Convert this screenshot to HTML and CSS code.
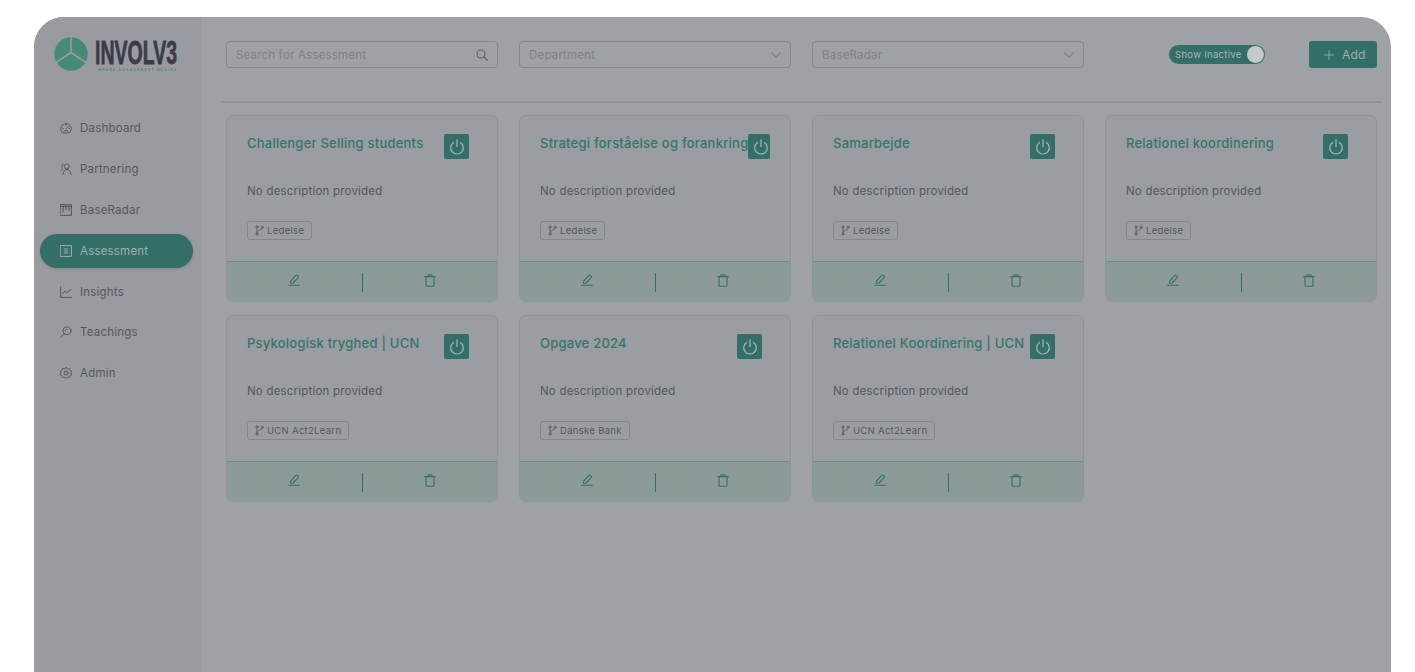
FILE: index.html
```html
<!DOCTYPE html>
<html lang="en">
<head>
<meta charset="utf-8">
<title>Involv3 - Assessment</title>
<link rel="stylesheet" href="styles.css">
</head>
<body>
<svg class="defs" width="0" height="0" aria-hidden="true">
  <symbol id="i-power" viewBox="0 0 16 16"><path d="M4.600 3.400a6.300 6.300 0 1 0 6.800 0M8 .8v6.600"/></symbol>
  <symbol id="i-branch" viewBox="0 0 10 12"><circle cx="2.200" cy="2" r="1.200"/><circle cx="2.200" cy="10" r="1.200"/><circle cx="8" cy="2.400" r="1.200"/><path d="M2.200 3.200v5.600M8 3.600c0 2.400-5.800 1.600-5.800 4.400"/></symbol>
  <symbol id="i-edit" viewBox="0 0 12 12"><path d="M.6 11.300h10.800M2.400 9.200l.4-2.400L7.900 1.300a.9.9 0 0 1 1.300 0l1 1a.9.9 0 0 1 0 1.300L5 9l-2.600.2z"/></symbol>
  <symbol id="i-trash" viewBox="0 0 12 13"><path d="M.6 2.600h10.800M2 2.600v8.600a1 1 0 0 0 1 1h6a1 1 0 0 0 1-1V2.600M4 2.600V1.400a.7.7 0 0 1 .7-.7h2.600a.7.7 0 0 1 .7.7v1.200"/></symbol>
  <symbol id="i-chevron" viewBox="0 0 10 6"><path d="M.7.8 5 5.200 9.300.8"/></symbol>
</svg>
<div class="app">
  <aside class="sidebar">
    <div class="logo">
      <svg class="logo-mark" viewBox="0 0 34 34" width="34" height="34"><circle cx="17" cy="17" r="16.700" class="logo-disc"/><path d="M17 0v15.500M17 15.500 2 25.500M17 15.500l15 10" class="logo-cut"/></svg>
      <svg class="logo-word" viewBox="0 0 86 36" width="86" height="36"><text x="1" y="24" textLength="82" lengthAdjust="spacingAndGlyphs" class="logo-name">INVOLV3</text><text x="4" y="31" textLength="78" class="logo-tag">WHERE ENGAGEMENT BEGINS</text></svg>
    </div>
    <nav class="nav">
      <a class="nav-item"><svg class="nav-icon" viewBox="0 0 12 12"><path d="M2.200 10.600a5.300 5.300 0 1 1 7.600 0zM6 6.800l2.300-2.300M2.500 6.400h.8M8.800 6.400h.8M6 2.600v.8M4.200 8.800h3.600"/></svg><span>Dashboard</span></a>
      <a class="nav-item"><svg class="nav-icon" viewBox="0 0 12 12"><circle cx="6.800" cy="3.400" r="2.500"/><path d="M3 11.400c.4-3 1.800-5 3.800-5s3.800 2 4.400 5M3.400 1C2 1.600 1.500 3 2.200 4.400M.6 7.800l2-2"/></svg><span>Partnering</span></a>
      <a class="nav-item"><svg class="nav-icon" viewBox="0 0 12 12"><rect x=".6" y=".6" width="10.800" height="10.800"/><path d="M.6 2.400h10.800M3 2.400v5.600M6 2.400v3M9 2.400v3.600" class="nav-thick"/></svg><span>BaseRadar</span></a>
      <a class="nav-item is-active"><svg class="nav-icon" viewBox="0 0 12 12"><rect x=".6" y=".6" width="10.800" height="10.800"/><rect x="3.800" y="3" width="4.400" height="6" class="nav-fill"/></svg><span>Assessment</span></a>
      <a class="nav-item"><svg class="nav-icon" viewBox="0 0 12 12"><path d="M.6 1v10.400h10.800M2 8l2.800-2.800 2 1.600L11 3.400"/></svg><span>Insights</span></a>
      <a class="nav-item"><svg class="nav-icon" viewBox="0 0 12 12"><circle cx="7" cy="4.800" r="4"/><path d="M4.200 7.800.6 11.500M5.200 4.800c.2-.8.800-1.300 1.700-1.300"/></svg><span>Teachings</span></a>
      <a class="nav-item"><svg class="nav-icon" viewBox="0 0 12 12"><path d="M6 .4l1.400 1.300 1.900-.3.600 1.800 1.700.9-.7 1.900.7 1.900-1.700.9-.6 1.800-1.900-.3L6 11.600l-1.400-1.300-1.900.3-.6-1.800L.4 7.900 1.100 6 .4 4.100l1.700-.9.6-1.800 1.900.3z"/><circle cx="6" cy="6" r="2"/></svg><span>Admin</span></a>
    </nav>
  </aside>
  <main class="main">
    <div class="toolbar">
      <div class="field"><span>Search for Assessment</span><svg class="field-icon" viewBox="0 0 12 12"><circle cx="5" cy="5" r="4"/><path d="M8 8l3.400 3.400"/></svg></div>
      <div class="field"><span>Department</span><svg class="field-icon chevron"><use href="#i-chevron"/></svg></div>
      <div class="field"><span>BaseRadar</span><svg class="field-icon chevron"><use href="#i-chevron"/></svg></div>
      <div class="actions">
        <div class="toggle"><span>Show Inactive</span><i class="knob"></i></div>
        <button class="add"><svg class="add-icon" viewBox="0 0 12 12"><path d="M6 .8v10.400M.8 6h10.400"/></svg><span>Add</span></button>
      </div>
    </div>
    <hr class="rule">
    <section class="cards">
      <article class="card">
        <div class="card-head"><h3>Challenger Selling students</h3><button class="power"><svg><use href="#i-power"/></svg></button></div>
        <p>No description provided</p>
        <span class="tag"><svg><use href="#i-branch"/></svg>Ledelse</span>
        <div class="card-foot"><svg class="foot-edit"><use href="#i-edit"/></svg><i class="sep"></i><svg class="foot-trash"><use href="#i-trash"/></svg></div>
      </article>
      <article class="card">
        <div class="card-head"><h3>Strategi forståelse og forankring</h3><button class="power"><svg><use href="#i-power"/></svg></button></div>
        <p>No description provided</p>
        <span class="tag"><svg><use href="#i-branch"/></svg>Ledelse</span>
        <div class="card-foot"><svg class="foot-edit"><use href="#i-edit"/></svg><i class="sep"></i><svg class="foot-trash"><use href="#i-trash"/></svg></div>
      </article>
      <article class="card">
        <div class="card-head"><h3>Samarbejde</h3><button class="power"><svg><use href="#i-power"/></svg></button></div>
        <p>No description provided</p>
        <span class="tag"><svg><use href="#i-branch"/></svg>Ledelse</span>
        <div class="card-foot"><svg class="foot-edit"><use href="#i-edit"/></svg><i class="sep"></i><svg class="foot-trash"><use href="#i-trash"/></svg></div>
      </article>
      <article class="card">
        <div class="card-head"><h3>Relationel koordinering</h3><button class="power"><svg><use href="#i-power"/></svg></button></div>
        <p>No description provided</p>
        <span class="tag"><svg><use href="#i-branch"/></svg>Ledelse</span>
        <div class="card-foot"><svg class="foot-edit"><use href="#i-edit"/></svg><i class="sep"></i><svg class="foot-trash"><use href="#i-trash"/></svg></div>
      </article>
      <article class="card">
        <div class="card-head"><h3>Psykologisk tryghed | UCN</h3><button class="power"><svg><use href="#i-power"/></svg></button></div>
        <p>No description provided</p>
        <span class="tag"><svg><use href="#i-branch"/></svg>UCN Act2Learn</span>
        <div class="card-foot"><svg class="foot-edit"><use href="#i-edit"/></svg><i class="sep"></i><svg class="foot-trash"><use href="#i-trash"/></svg></div>
      </article>
      <article class="card">
        <div class="card-head"><h3>Opgave 2024</h3><button class="power"><svg><use href="#i-power"/></svg></button></div>
        <p>No description provided</p>
        <span class="tag"><svg><use href="#i-branch"/></svg>Danske Bank</span>
        <div class="card-foot"><svg class="foot-edit"><use href="#i-edit"/></svg><i class="sep"></i><svg class="foot-trash"><use href="#i-trash"/></svg></div>
      </article>
      <article class="card">
        <div class="card-head"><h3>Relationel Koordinering | UCN</h3><button class="power"><svg><use href="#i-power"/></svg></button></div>
        <p>No description provided</p>
        <span class="tag"><svg><use href="#i-branch"/></svg>UCN Act2Learn</span>
        <div class="card-foot"><svg class="foot-edit"><use href="#i-edit"/></svg><i class="sep"></i><svg class="foot-trash"><use href="#i-trash"/></svg></div>
      </article>
    </section>
  </main>
</div>
</body>
</html>
```
FILE: styles.css
```css
* { box-sizing: border-box; }
html, body { height: 100%; }
body {
  margin: 0;
  padding: 17px 24px 0 34px;
  background: #fff;
  overflow: hidden;
  font-family: Inter, "Liberation Sans", sans-serif;
  color: #55585d;
}
.defs { position: absolute; }
svg { fill: none; stroke: currentColor; stroke-linecap: round; stroke-linejoin: round; }

.app {
  display: flex;
  height: 100%;
  border-radius: 30px 30px 0 0;
  overflow: hidden;
  background: #9ea1a5;
}

.sidebar { flex: 0 0 167px; background: #999ba0; padding: 20px 8px 0 6px; }
.logo { display: flex; align-items: flex-start; gap: 6px; padding-left: 14px; height: 74.400px; }
.logo-mark { flex: none; stroke: none; }
.logo-disc { fill: #478a78; }
.logo-cut { stroke: #999ba0; stroke-width: 1.600; fill: none; }
.logo-word { flex: none; margin-top: 3px; stroke: none; overflow: visible; }
.logo-name { fill: #3a3d47; stroke: #3a3d47; stroke-width: .8px; font: 700 33px "Liberation Sans", sans-serif; }
.logo-tag { fill: #478a78; stroke: none; font: 700 3px "Liberation Sans", sans-serif; }

.nav { display: flex; flex-direction: column; gap: 6.800px; }
.nav-item {
  display: flex;
  align-items: center;
  gap: 8px;
  height: 34px;
  padding-left: 20px;
  border-radius: 17px;
  font-size: 11.500px;
  letter-spacing: .2px;
  color: #55585d;
}
.nav-icon { flex: none; width: 12px; height: 12px; stroke-width: 1; }
.nav-thick { stroke-width: 1.200; }
.nav-item.is-active { background: #336f66; color: #9fb0ac; box-shadow: 0 1px 3px rgba(0,0,0,.15); }
.nav-fill { fill: currentColor; stroke: none; opacity: .45; }

.main { flex: 1; min-width: 0; padding: 24px 14px 0 25px; }

.toolbar { display: grid; grid-template-columns: repeat(4, 272px); column-gap: 21px; align-items: start; }
.field {
  display: flex;
  align-items: center;
  justify-content: space-between;
  height: 27px;
  padding: 0 9px 0 9px;
  border: 1px solid #84878c;
  border-radius: 4px;
  font-size: 11.500px;
  letter-spacing: .2px;
  color: #7f8287;
}
.field-icon { width: 12px; height: 12px; stroke-width: 1.100; color: #5c5f64; }
.field-icon.chevron { width: 10px; height: 6px; color: #7a7d82; }

.actions { display: flex; justify-content: flex-end; gap: 44px; }
.toggle {
  display: flex;
  align-items: center;
  justify-content: space-between;
  width: 96px;
  height: 19px;
  margin-top: 4px;
  padding: 0 1px 0 6px;
  border-radius: 10px;
  background: #336f66;
  color: #a6b6b2;
  font-size: 9.500px;
  letter-spacing: .3px;
}
.knob { width: 17px; height: 17px; border-radius: 50%; background: #c6c8ca; }
.add {
  display: flex;
  align-items: center;
  gap: 8px;
  width: 68px;
  height: 27px;
  padding: 0 0 0 15px;
  border: 0;
  border-radius: 3px;
  background: #336f66;
  color: #9fb0ac;
  font: 12px Inter, "Liberation Sans", sans-serif;
  letter-spacing: .2px;
}
.add-icon { width: 10px; height: 10px; stroke-width: 1; }

.rule { height: 0; margin: 33px -5px 12px; border: 0; border-top: 2px solid #92959a; }

.cards { display: grid; grid-template-columns: repeat(4, 272px); column-gap: 21px; row-gap: 13px; }
.card {
  display: flex;
  flex-direction: column;
  height: 187px;
  padding: 18px 20px 0;
  border: 1px solid #909398;
  border-radius: 7px;
  background: #9a9da2;
  overflow: hidden;
}
.card-head { display: flex; width: 230px; align-items: flex-start; }
.card-head h3 {
  flex: 0 0 197px;
  min-width: max-content;
  margin: 0;
  font-size: 13px;
  font-weight: 500;
  line-height: 18px;
  letter-spacing: .23px;
  white-space: nowrap;
  color: #34756a;
}
.power {
  flex: 0 1 25px;
  min-width: 0;
  height: 25px;
  display: flex;
  align-items: center;
  padding: 0 0 0 5px;
  border: 0;
  border-radius: 2px;
  background: #336f66;
  color: #a9b9b5;
  overflow: hidden;
}
.power svg { flex: none; width: 16px; height: 16px; stroke-width: 1.200; }
.card p { margin: 24px 0 22px; font-size: 11.500px; line-height: 16px; letter-spacing: .2px; color: #55585d; }
.tag {
  align-self: flex-start;
  display: flex;
  align-items: center;
  gap: 3px;
  height: 19px;
  padding: 0 7px 0 7px;
  border: 1px solid #84878c;
  border-radius: 3px;
  font-size: 9.500px;
  letter-spacing: .3px;
  color: #55585d;
}
.tag svg { width: 9px; height: 11px; stroke-width: .9; }
.card-foot {
  display: grid;
  grid-template-columns: 1fr 1px 1fr;
  align-items: center;
  justify-items: center;
  height: 40px;
  margin: auto -20px 0;
  border-top: 1px solid #6a8f87;
  background: #8c9a9a;
  color: #336f66;
}
.foot-edit { width: 12px; height: 12px; margin-bottom: 3px; stroke-width: 1.100; }
.foot-trash { width: 12px; height: 13px; margin-bottom: 3px; stroke-width: 1.100; }
.sep { width: 1px; height: 19px; margin-top: 1px; background: #336f66; }
```
